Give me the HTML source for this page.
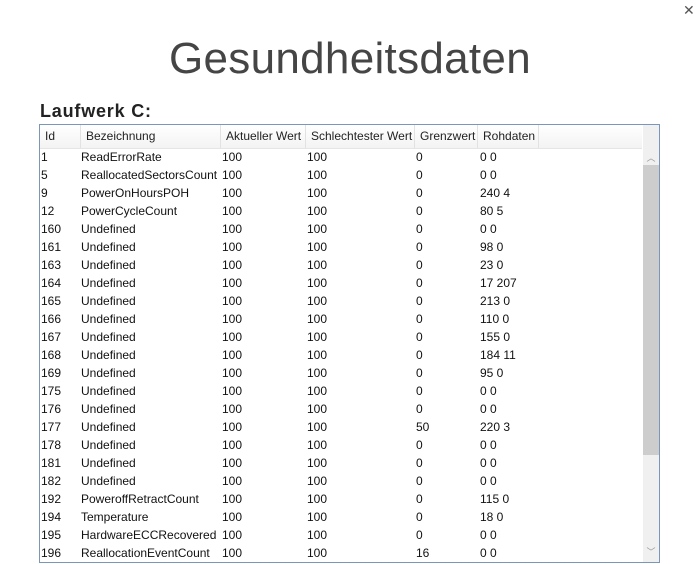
<!DOCTYPE html><html><head><style>
body{margin:0;width:700px;height:564px;background:#fff;font-family:"Liberation Sans",sans-serif;position:relative;overflow:hidden}
.t{position:absolute;left:0;width:700px;top:34px;text-align:center;font-size:44px;color:#454545;letter-spacing:0.3px}
.x{position:absolute;left:683px;top:2px;font-size:14px;color:#555}
.l{position:absolute;left:40px;top:101px;font-size:18px;font-weight:bold;color:#222;letter-spacing:0.8px}
.box{position:absolute;left:39px;top:124px;width:619px;height:437px;border:1px solid #7a96b8;overflow:hidden}
.hd{position:absolute;left:0;top:0;width:602px;height:23px;background:linear-gradient(#fff,#f3f3f3);border-bottom:1px solid #e5e5e5}
.hc{position:absolute;top:0;height:23px;line-height:23px;font-size:12px;color:#222;border-right:1px solid #e2e2e2;padding-left:5px;box-sizing:border-box}
.sb{position:absolute;left:603px;top:0;width:16px;height:437px;background:#f0f0f0}
.th{position:absolute;left:603px;top:40px;width:16px;height:290px;background:#cdcdcd}
.r{position:absolute;left:0;height:18px;line-height:18px;font-size:12px;color:#111;white-space:nowrap}
.r span{position:absolute}
</style></head><body>
<div class="x">✕</div>
<div class="t">Gesundheitsdaten</div>
<div class="l">Laufwerk C:</div>
<div class="box">
<div class="hd">
<div class="hc" style="left:0;width:41px">Id</div>
<div class="hc" style="left:41px;width:140px">Bezeichnung</div>
<div class="hc" style="left:181px;width:85px">Aktueller Wert</div>
<div class="hc" style="left:266px;width:109px">Schlechtester Wert</div>
<div class="hc" style="left:375px;width:63px">Grenzwert</div>
<div class="hc" style="left:438px;width:61px">Rohdaten</div>
</div>
<div class="sb"><div style="position:absolute;top:26px;width:16px;text-align:center;font-size:9px;color:#999">︿</div><div style="position:absolute;top:420px;width:16px;text-align:center;font-size:9px;color:#999">﹀</div></div>
<div class="th"></div>
<div id="rows"></div>
</div>
<script>
var d=[[1,"ReadErrorRate",0,"0 0"],[5,"ReallocatedSectorsCount",0,"0 0"],[9,"PowerOnHoursPOH",0,"240 4"],[12,"PowerCycleCount",0,"80 5"],[160,"Undefined",0,"0 0"],[161,"Undefined",0,"98 0"],[163,"Undefined",0,"23 0"],[164,"Undefined",0,"17 207"],[165,"Undefined",0,"213 0"],[166,"Undefined",0,"110 0"],[167,"Undefined",0,"155 0"],[168,"Undefined",0,"184 11"],[169,"Undefined",0,"95 0"],[175,"Undefined",0,"0 0"],[176,"Undefined",0,"0 0"],[177,"Undefined",50,"220 3"],[178,"Undefined",0,"0 0"],[181,"Undefined",0,"0 0"],[182,"Undefined",0,"0 0"],[192,"PoweroffRetractCount",0,"115 0"],[194,"Temperature",0,"18 0"],[195,"HardwareECCRecovered",0,"0 0"],[196,"ReallocationEventCount",16,"0 0"]];
var h="";d.forEach(function(r,i){h+='<div class="r" style="top:'+(23+i*18)+'px"><span style="left:1px">'+r[0]+'</span><span style="left:41px">'+r[1]+'</span><span style="left:182px">100</span><span style="left:267px">100</span><span style="left:376px">'+r[2]+'</span><span style="left:440px">'+r[3]+'</span></div>'});
document.getElementById("rows").innerHTML=h;
</script>
</body></html>
